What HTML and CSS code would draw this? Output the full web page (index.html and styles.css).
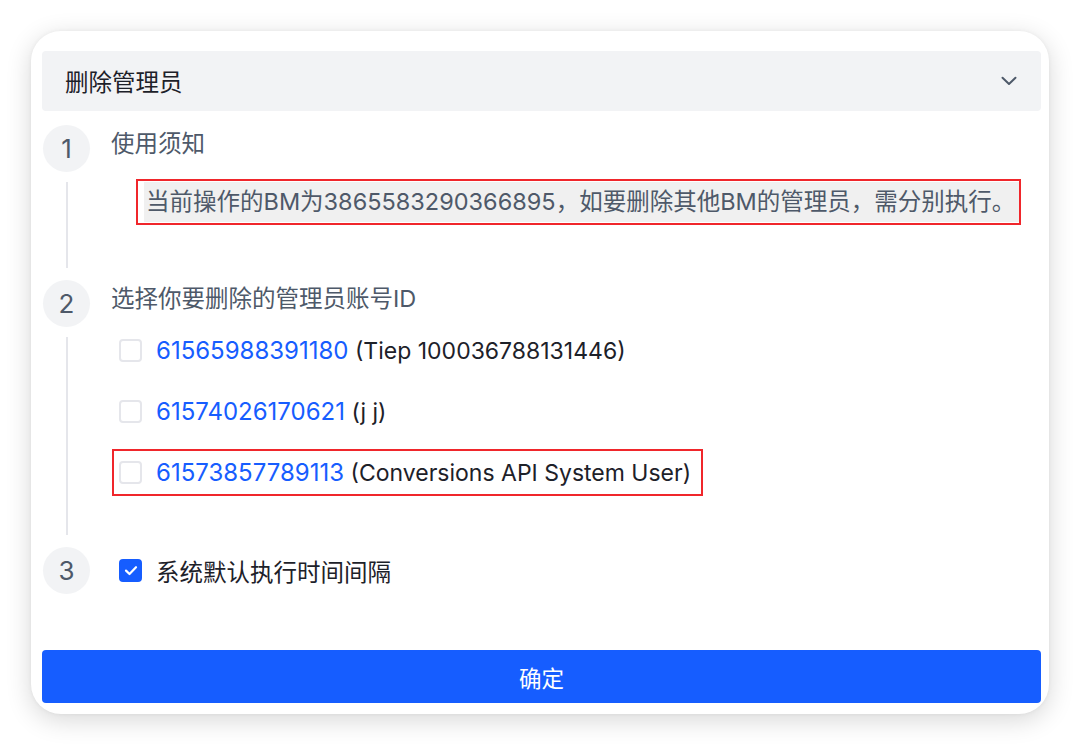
FILE: index.html
```html
<!DOCTYPE html>
<html lang="zh">
<head>
<meta charset="utf-8">
<title>删除管理员</title>
<link rel="stylesheet" href="styles.css">
</head>
<body>
<div class="card">
  <div class="header">
    <span class="header-title">删除管理员</span>
    <svg class="chevron" width="16" height="10" viewBox="0 0 16 10"><path d="M1.5 1.8 L8 8 L14.5 1.8" fill="none" stroke="#4e5969" stroke-width="2" stroke-linecap="round" stroke-linejoin="round"/></svg>
  </div>

  <div class="step step-1">
    <div class="rail"><div class="num">1</div><div class="line"></div></div>
    <div class="body">
      <div class="title">使用须知</div>
      <div class="notice"><span class="notice-text">当前操作的BM为3865583290366895，如要删除其他BM的管理员，需分别执行。</span></div>
    </div>
  </div>

  <div class="step step-2">
    <div class="rail"><div class="num">2</div><div class="line"></div></div>
    <div class="body">
      <div class="title">选择你要删除的管理员账号ID</div>
      <div class="options">
        <label class="opt"><span class="box"></span><span class="id">61565988391180</span>&nbsp;<span class="name">(Tiep 100036788131446)</span></label>
        <label class="opt"><span class="box"></span><span class="id">61574026170621</span>&nbsp;<span class="name">(j j)</span></label>
        <label class="opt marked"><span class="box"></span><span class="id">61573857789113</span>&nbsp;<span class="name">(Conversions API System User)</span></label>
      </div>
    </div>
  </div>

  <div class="step step-3">
    <div class="rail"><div class="num">3</div></div>
    <div class="body center">
      <label class="opt"><span class="box checked"><svg width="14" height="11" viewBox="0 0 14 11"><path d="M2 5.6 L5.5 9 L12 2.2" fill="none" stroke="#fff" stroke-width="2.2" stroke-linecap="round" stroke-linejoin="round"/></svg></span><span class="name cjk">系统默认执行时间间隔</span></label>
    </div>
  </div>

  <button class="confirm">确定</button>
</div>
</body>
</html>
```

FILE: styles.css
```css
* { box-sizing: border-box; }
html, body { margin: 0; padding: 0; background: #ffffff; }
body {
  font-family: Inter, "Noto Sans CJK SC", sans-serif;
  width: 1080px;
  height: 745px;
  overflow: hidden;
}
.card {
  margin: 31px 0 0 31px;
  width: 1018px;
  height: 683px;
  background: #ffffff;
  border-radius: 30px;
  box-shadow: 0 6px 26px rgba(0, 0, 0, 0.16), 0 0 4px rgba(0, 0, 0, 0.05);
  padding: 20px 8px 11px 11px;
  display: flex;
  flex-direction: column;
}
.header {
  height: 60px;
  background: #f2f3f5;
  border-radius: 4px;
  display: flex;
  align-items: center;
  justify-content: space-between;
  padding: 0 24px 0 23px;
}
.header-title {
  font-size: 23.5px;
  color: #1d2129;
}
.chevron { display: block; }

.step {
  display: flex;
}
.step-1 { margin-top: 14px; }
.rail {
  width: 47px;
  margin-left: 1px;
  display: flex;
  flex-direction: column;
  align-items: center;
  flex-shrink: 0;
}
.num {
  width: 47px;
  height: 47px;
  border-radius: 50%;
  background: #f2f3f5;
  color: #4e5969;
  font-size: 26px;
  display: flex;
  align-items: center;
  justify-content: center;
  flex-shrink: 0;
}
.line {
  flex: 1;
  width: 2px;
  background: #e5e6eb;
  margin: 10px 0 12px;
}
.body {
  padding-left: 21px;
  flex: 1;
}
.body.center {
  display: flex;
  align-items: center;
}
.step-1 .body { padding-bottom: 55px; }
.step-2 .body { padding-bottom: 51px; }
.title {
  margin-top: 4px;
  font-size: 23.5px;
  line-height: 30px;
  color: #4e5969;
}
.notice {
  margin-top: 20px;
  margin-left: 25px;
  width: fit-content;
  height: 46px;
  border: 2px solid #f0262b;
  padding: 1px 0 1px 6px;
}
.notice-text {
  display: block;
  height: 40px;
  line-height: 40px;
  background: #f0f0f0;
  padding: 0 4px 0 2px;
  font-size: 23.5px;
  color: #4e5969;
  white-space: nowrap;
}
.options {
  margin-top: 13px;
  display: flex;
  flex-direction: column;
  gap: 14px;
}
.opt {
  display: flex;
  align-items: center;
  height: 47px;
  width: fit-content;
  margin-left: 1px;
  border: 2px solid transparent;
  padding: 0 10px 0 5px;
  font-size: 23px;
  white-space: nowrap;
}
.opt.marked { border-color: #f0262b; }
.box {
  width: 23px;
  height: 23px;
  border: 2px solid #e5e6eb;
  border-radius: 4px;
  background: #ffffff;
  margin-right: 14px;
  flex-shrink: 0;
  display: flex;
  align-items: center;
  justify-content: center;
}
.box.checked {
  background: #165dff;
  border-color: #165dff;
}
.box svg { display: block; }
.id { color: #165dff; font-size: 24px; }
.name { color: #1d2129; }
.name.cjk { font-size: 23.5px; }

.confirm {
  margin-top: 56px;
  width: 100%;
  height: 53px;
  border: none;
  border-radius: 4px;
  background: #165dff;
  color: #ffffff;
  font-family: Inter, "Noto Sans CJK SC", sans-serif;
  font-size: 22.5px;
  padding: 0;
}
```
